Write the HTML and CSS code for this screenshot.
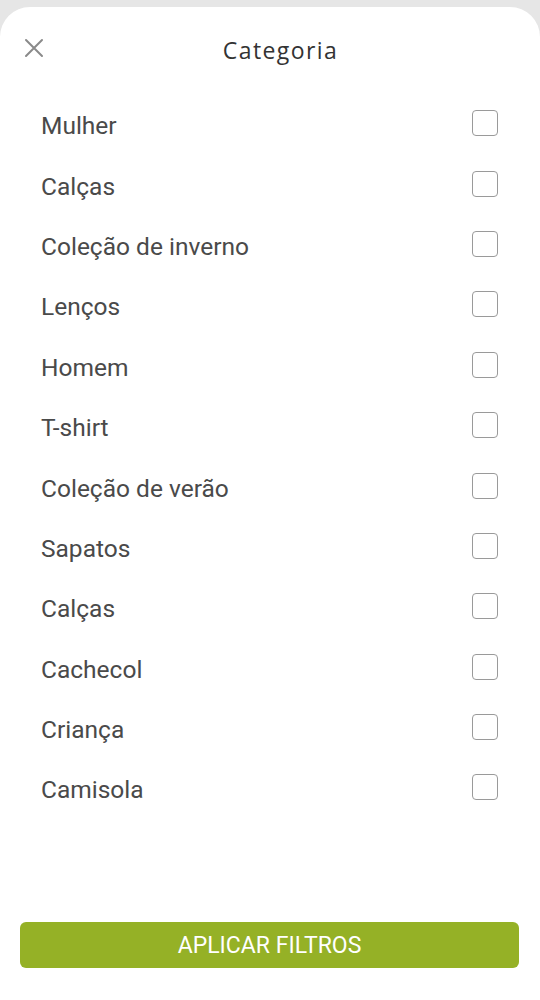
FILE: index.html
```html
<!DOCTYPE html>
<html lang="pt">
<head>
<meta charset="utf-8">
<link rel="stylesheet" href="styles.css">
</head>
<body>
<div class="sheet">
  <header class="header">
    <svg class="close" width="20" height="20" viewBox="0 0 20 20"><path d="M2 2 L18 18 M18 2 L2 18" stroke="#8a8a8a" stroke-width="2" stroke-linecap="round" fill="none"/></svg>
    <h1 class="title">Categoria</h1>
  </header>
  <ul class="list">
    <li class="row"><span class="label">Mulher</span><span class="box"></span></li>
    <li class="row"><span class="label">Calças</span><span class="box"></span></li>
    <li class="row"><span class="label">Coleção de inverno</span><span class="box"></span></li>
    <li class="row"><span class="label">Lenços</span><span class="box"></span></li>
    <li class="row"><span class="label">Homem</span><span class="box"></span></li>
    <li class="row"><span class="label">T-shirt</span><span class="box"></span></li>
    <li class="row"><span class="label">Coleção de verão</span><span class="box"></span></li>
    <li class="row"><span class="label">Sapatos</span><span class="box"></span></li>
    <li class="row"><span class="label">Calças</span><span class="box"></span></li>
    <li class="row"><span class="label">Cachecol</span><span class="box"></span></li>
    <li class="row"><span class="label">Criança</span><span class="box"></span></li>
    <li class="row"><span class="label">Camisola</span><span class="box"></span></li>
  </ul>
  <button class="apply">APLICAR FILTROS</button>
</div>
</body>
</html>
```
FILE: styles.css
```css
html, body { margin: 0; padding: 0; }
body {
  background: #e6e6e6;
  font-family: Roboto, "Liberation Sans", sans-serif;
  width: 540px;
  height: 1000px;
  overflow: hidden;
}
.sheet {
  margin-top: 7px;
  height: 993px;
  background: #fff;
  border-radius: 30px 30px 0 0;
  display: flex;
  flex-direction: column;
  box-sizing: border-box;
}
.header {
  position: relative;
  padding-top: 28px;
  height: 30px;
  display: flex;
  justify-content: center;
}
.close {
  position: absolute;
  left: 24px;
  top: 31px;
}
.title {
  margin: 0 0 0 21px;
  font-family: "Open Sans", sans-serif;
  font-weight: 400;
  font-size: 23px;
  letter-spacing: 1.4px;
  line-height: 30px;
  color: #333;
}
.list {
  list-style: none;
  margin: 29px 0 0;
  padding: 0 41px 0 41px;
}
.row {
  height: 60.4px;
  display: flex;
  align-items: center;
  justify-content: space-between;
}
.label {
  font-size: 24.5px;
  color: #4a4a4a;
  line-height: 30px;
  padding-top: 4px;
}
.box {
  width: 24px;
  height: 24px;
  border: 1.5px solid #9a9a9a;
  border-radius: 4px;
  margin-right: 1px;
  margin-bottom: 2px;
}
.apply {
  margin: auto 21px 32px 20px;
  height: 46px;
  border: none;
  border-radius: 6px;
  background: #95b126;
  color: #fff;
  font-family: Roboto, sans-serif;
  font-size: 23px;
  font-weight: 400;
  padding: 0;
}
```
